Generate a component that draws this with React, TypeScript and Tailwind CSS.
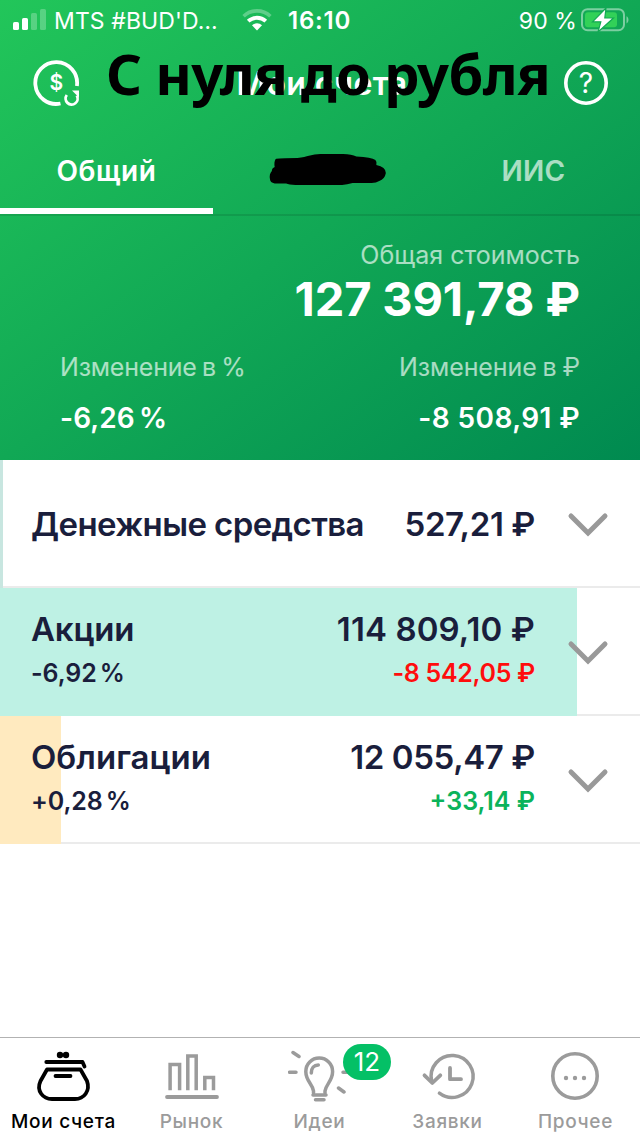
import type { ReactNode } from "react";

type Asset = {
  name: string;
  amount: string;
  percent?: string;
  change?: string;
  changeClass?: string;
  share: number;
  barClass: string;
  nameClass: string;
  amountClass: string;
};

const assets: Asset[] = [
  {
    name: "Денежные средства",
    amount: "527,21 ₽",
    share: 3,
    barClass: "bg-[#c8e6e0]",
    nameClass: "tracking-[-0.6px]",
    amountClass: "tracking-[-0.4px]",
  },
  {
    name: "Акции",
    amount: "114 809,10 ₽",
    percent: "-6,92 %",
    change: "-8 542,05 ₽",
    changeClass: "text-[#ff0d0d] tracking-[-0.3px]",
    share: 577,
    barClass: "bg-[#bef1e4]",
    nameClass: "tracking-[-0.2px]",
    amountClass: "tracking-[0.1px]",
  },
  {
    name: "Облигации",
    amount: "12 055,47 ₽",
    percent: "+0,28 %",
    change: "+33,14 ₽",
    changeClass: "text-[#0bb35b] tracking-[0px]",
    share: 61,
    barClass: "bg-[#ffeabf]",
    nameClass: "tracking-[0px]",
    amountClass: "tracking-[-0.4px]",
  },
];

function StatusBar() {
  return (
    <div className="flex h-10 items-center pl-[13px] pr-[11px] text-[23px] leading-10">
      <svg width="34" height="22" viewBox="0 0 34 22" fill="#fff">
        <rect x="0" y="13" width="6" height="8" rx="1.6" />
        <rect x="9" y="9" width="6" height="12" rx="1.6" />
        <rect x="18" y="4" width="6" height="17" rx="1.6" opacity="0.25" />
        <rect x="27" y="0" width="6" height="21" rx="1.6" opacity="0.25" />
      </svg>
      <span className="ml-[7px] w-[188px] pt-0.5 whitespace-nowrap tracking-[0.1px]">MTS #BUD'D…</span>
      <svg width="30" height="22" viewBox="0 0 30 22" fill="none" stroke="#fff">
        <path d="M1.6 7.2a19.5 19.5 0 0 1 26.8 0" strokeWidth="3.6" opacity="0.3" />
        <path d="M6.2 12.2a13 13 0 0 1 17.6 0" strokeWidth="3.8" />
        <path d="M15 21.5l-5-5.2a7.4 7.4 0 0 1 10 0z" fill="#fff" stroke="none" />
      </svg>
      <span className="ml-4 pt-0.5 text-[24px] font-semibold tracking-[0.8px]">16:10</span>
      <span className="ml-auto pt-0.5 tracking-[0.1px]">90 %</span>
      <svg className="ml-[4px]" width="48" height="24" viewBox="0 0 48 24">
        <rect
          x="1"
          y="1.2"
          width="42"
          height="21"
          rx="5.5"
          fill="none"
          stroke="#fff"
          strokeOpacity="0.45"
          strokeWidth="2"
        />
        <path d="M45.5 8.2v7.2c2.6-1 2.6-6.2 0-7.2z" fill="#fff" opacity="0.45" />
        <rect x="4" y="4.2" width="32" height="15" rx="3" fill="#32d158" />
        <path
          d="M25 0L11.5 13.800h8.300L17 24 32.500 10h-8.700z"
          fill="#fff"
          stroke="#12a953"
          strokeWidth="1.2"
        />
      </svg>
    </div>
  );
}

function Header() {
  return (
    <div className="relative flex h-[86px] items-center justify-between px-8">
      <svg width="48" height="48" viewBox="0 0 48 48" fill="none" stroke="#fff">
        <path d="M44.9 27A20.9 20.9 0 1 0 28.5 44.5" strokeWidth="3.8" />
        <path d="M34.8 36A6 6 0 1 0 44.8 36.5" strokeWidth="2.8" />
        <path d="M40 31.5h7v7z" fill="#fff" stroke="none" />
        <text x="24.3" y="31" textAnchor="middle" fontSize="21" fontWeight="600" fill="#fff" stroke="none">
          $
        </text>
      </svg>
      <span className="pt-0.5 text-[32px] font-semibold tracking-[0.4px]">Мои счета</span>
      <svg width="44" height="44" viewBox="0 0 44 44" fill="none" stroke="#fff">
        <circle cx="22" cy="22" r="20.2" strokeWidth="3.6" />
        <text x="22" y="32" textAnchor="middle" fontSize="28" fontWeight="400" fill="#fff" stroke="none">
          ?
        </text>
      </svg>
      <div className="absolute top-[-3px] left-[106px] font-['Noto_Sans',sans-serif] text-[56px] leading-[72px] font-bold tracking-[-0.7px] whitespace-nowrap text-black">
        С нуля до рубля
      </div>
    </div>
  );
}

function Tabs() {
  return (
    <div className="flex h-[90px] border-b-2 border-black/10 text-[28px] leading-[91px]">
      <div className="w-[213px] border-b-6 border-white text-center font-semibold tracking-[0.6px]">Общий</div>
      <div className="flex w-[214px] justify-center">
        <svg className="mt-[28px] ml-[15px]" width="118" height="34" viewBox="0 0 118 34">
          <path
            d="M7 5Q9 4 30 4Q38 3 42 1.8Q48 0 54 0H78Q87 0 92 2.5Q108 3 112 6Q114 8 113 11Q123 13 123 19Q122 25 116 27Q113 29 108 29H88Q82 30.5 77 31H28Q21 30.5 18 29.5H6Q1 28.5 1 25Q0 20 3 17Q3 14 6 13Q5 8 7 5Z"
            transform="scale(0.95 1)"
          />
        </svg>
      </div>
      <div className="w-[213px] text-center font-semibold tracking-[0.2px] text-white/65">ИИС</div>
    </div>
  );
}

function Summary() {
  return (
    <div className="h-[244px] px-[60px] pt-[22px]">
      <div className="text-right text-[25px] leading-[34px] text-white/65">Общая стоимость</div>
      <div className="text-right text-[47px] leading-[54px] font-bold tracking-[-0.15px]">127 391,78 ₽</div>
      <div className="mt-[24px] flex justify-between text-[25px] leading-[34px] text-white/65">
        <span className="tracking-[-0.2px] [word-spacing:-1.5px]">Изменение в %</span>
        <span className="tracking-[-0.1px] [word-spacing:-1px]">Изменение в ₽</span>
      </div>
      <div className="mt-[14px] flex justify-between text-[28px] leading-[40px] font-semibold">
        <span className="tracking-[0.1px] [word-spacing:-3px]">-6,26 %</span>
        <span className="tracking-[0.4px]">-8 508,91 ₽</span>
      </div>
    </div>
  );
}

function AssetRow({ asset }: { asset: Asset }) {
  return (
    <div className="relative h-32 border-b-2 border-[#ebebeb] bg-white text-[#1a1e3c]">
      <div className={`absolute top-0 left-0 h-32 ${asset.barClass}`} style={{ width: asset.share }} />
      <div className="relative flex h-full items-center pt-px pr-[31px] pl-[31px]">
        <div className="w-[504px] font-semibold">
          <div className="flex justify-between text-[33px] leading-[44px]">
            <span className={asset.nameClass}>{asset.name}</span>
            <span className={asset.amountClass}>{asset.amount}</span>
          </div>
          {asset.percent && (
            <div className="mb-0.5 flex justify-between text-[25px] leading-[44px]">
              <span className="tracking-[-0.1px] [word-spacing:-3px]">{asset.percent}</span>
              <span className={asset.changeClass}>{asset.change}</span>
            </div>
          )}
        </div>
        <svg className="mt-[3px] ml-auto" width="42" height="26" viewBox="0 0 42 26" fill="none">
          <path d="M4 4l17 17L38 4" stroke="#999" strokeWidth="5" strokeLinecap="round" />
        </svg>
      </div>
    </div>
  );
}

function NavItem({ label, active, children }: { label: string; active?: boolean; children: ReactNode }) {
  return (
    <div className={`flex w-32 flex-col items-center ${active ? "text-black" : "text-[#9b9b9b]"}`}>
      <svg
        className="mt-3"
        width="64"
        height="56"
        viewBox="0 0 64 56"
        fill="none"
        stroke="currentColor"
        strokeWidth="3.8"
        strokeLinecap="round"
        strokeLinejoin="round"
      >
        {children}
      </svg>
      <span className="mt-1 mr-px text-[19px] leading-6 font-medium tracking-[0.7px] whitespace-nowrap">{label}</span>
    </div>
  );
}

function BottomNav() {
  return (
    <div className="flex h-[99px] border-t border-[#b2b2b2] bg-white">
      <NavItem label="Мои счета" active>
        <g fill="currentColor" stroke="none">
          <circle cx="28" cy="5" r="3.2" />
          <circle cx="34" cy="5" r="3.2" />
        </g>
        <path d="M14.3 12H50.5L52.5 16.5" />
        <path d="M15 19.5H48.5L55 31C58.5 41 52 49 43 49H20C11 49 4 41 8.5 31Z" />
        <path d="M23.5 26H38.5" />
      </NavItem>
      <NavItem label="Рынок">
        <path
          d="M10.1 40.3V14.5H19.6V40.3M27.8 40.3V6H36.2V40.3M44.8 40.3V27.5H53.5V40.3"
          strokeWidth="3.5"
          strokeLinecap="butt"
          strokeLinejoin="miter"
        />
        <path d="M7 47H57" />
      </NavItem>
      <NavItem label="Идеи">
        <g strokeWidth="3.5">
          <path d="M25.5 43V41C24.5 34 17.8 31 17.8 21.5A13.4 13.4 0 0 1 44.6 21.5C44.6 31 38 34 37 41V43" />
          <path d="M25 45H38M27.5 49.7H36" />
          <path d="M23.3 23C23.3 18 26 15 30.3 15" />
          <path d="M5 2.5L11 6.5M1.5 22.3H8M55 22.3H60M50.5 38L56 42" />
        </g>
      </NavItem>
      <NavItem label="Заявки">
        <path d="M15.6 31A21 21 0 1 1 23.4 43.2" strokeWidth="3.5" />
        <path d="M8.5 25.3L16.3 33L24.3 25.3" />
        <path d="M34 18V29.2H45" />
      </NavItem>
      <NavItem label="Прочее">
        <circle cx="31" cy="26" r="22.2" strokeWidth="3.6" />
        <g fill="currentColor" stroke="none">
          <circle cx="22" cy="28" r="2.2" />
          <circle cx="31" cy="28" r="2.2" />
          <circle cx="40" cy="28" r="2.2" />
        </g>
      </NavItem>
    </div>
  );
}

export default function App() {
  return (
    <div className="relative flex h-[1136px] w-[640px] flex-col overflow-hidden bg-white font-['Inter',sans-serif]">
      <div className="h-[460px] bg-[linear-gradient(to_bottom_right,#22c65a,#008a50)] text-white">
        <StatusBar />
        <Header />
        <Tabs />
        <Summary />
      </div>
      <div className="flex-1">
        {assets.map((asset) => (
          <AssetRow key={asset.name} asset={asset} />
        ))}
      </div>
      <BottomNav />
      <span className="absolute top-[1044px] left-[343px] h-9 w-12 rounded-full bg-[#04c066] text-center text-[26px] leading-9 text-white">
        12
      </span>
    </div>
  );
}
